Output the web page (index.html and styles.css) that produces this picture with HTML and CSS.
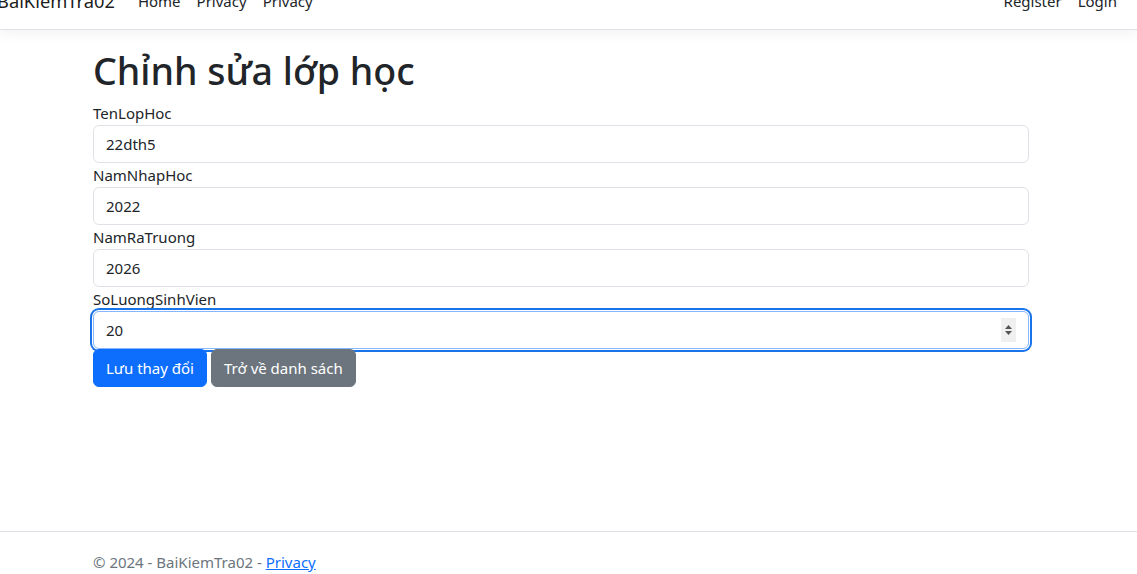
FILE: index.html
```html
<!DOCTYPE html>
<html lang="vi">
<head>
<meta charset="utf-8">
<title>Chỉnh sửa lớp học - BaiKiemTra02</title>
<link rel="stylesheet" href="styles.css">
</head>
<body>
<header class="site-header">
  <nav class="navbar">
    <div class="navbar-inner">
      <a class="brand" href="#">BaiKiemTra02</a>
      <ul class="nav nav-main">
        <li><a class="nav-link" href="#">Home</a></li>
        <li><a class="nav-link" href="#">Privacy</a></li>
        <li><a class="nav-link" href="#">Privacy</a></li>
      </ul>
      <ul class="nav nav-right">
        <li><a class="nav-link" href="#">Register</a></li>
        <li><a class="nav-link" href="#">Login</a></li>
      </ul>
    </div>
  </nav>
</header>
<main class="main">
  <div class="container">
    <h1 class="title">Chỉnh sửa lớp học</h1>
    <form class="form">
      <div class="field">
        <label class="label">TenLopHoc</label>
        <input class="control" type="text" value="22dth5">
      </div>
      <div class="field">
        <label class="label">NamNhapHoc</label>
        <input class="control" type="text" value="2022">
      </div>
      <div class="field">
        <label class="label">NamRaTruong</label>
        <input class="control" type="text" value="2026">
      </div>
      <div class="field">
        <label class="label">SoLuongSinhVien</label>
        <div class="control control-focus">
          <span class="value">20</span>
          <span class="spinner">
            <svg width="9" height="18" viewBox="0 0 9 18"><path d="M4.5 4 L8 8 H1 Z" fill="#555"/><path d="M1 10 H8 L4.5 14 Z" fill="#555"/></svg>
          </span>
        </div>
      </div>
      <div class="actions">
        <button type="button" class="btn btn-primary">Lưu thay đổi</button>
        <button type="button" class="btn btn-secondary">Trở về danh sách</button>
      </div>
    </form>
  </div>
</main>
<footer class="footer">
  <div class="container">© 2024 - BaiKiemTra02 - <a class="footer-link" href="#">Privacy</a></div>
</footer>
</body>
</html>
```

FILE: styles.css
```css
* { box-sizing: border-box; }
html, body { height: 100%; }
body {
  margin: 0;
  overflow: hidden;
  font-family: "Noto Sans", "Open Sans", sans-serif;
  font-size: 15px;
  line-height: 24px;
  color: #212529;
  background: #fff;
}
.site-header { margin-top: -27px; }
.navbar {
  background: #fff;
  border-bottom: 1px solid #dee2e6;
  box-shadow: 0 4px 12px rgba(0,0,0,.05);
  padding: 8px 0;
}
.navbar-inner {
  display: flex;
  align-items: center;
  padding: 0 12px 0 0;
  margin-left: -3px;
}
.brand {
  font-size: 18.3px;
  line-height: 30px;
  padding: 5px 0;
  margin-right: 15px;
  color: rgba(0,0,0,.9);
  text-decoration: none;
}
.nav {
  list-style: none;
  margin: 0;
  padding: 0;
  display: flex;
}
.nav-main { flex: 1; }
.nav-link {
  display: block;
  padding: 8px 8px;
  color: #212529;
  text-decoration: none;
}
.container {
  width: 936px;
  margin-left: 93px;
}
.main {
  min-height: 501px;
  padding-top: 15px;
}
.title {
  margin: 2px 0 6px;
  font-size: 37.5px;
  font-weight: 500;
  line-height: 48px;
}
.form { margin: 0; }
.field { display: flex; flex-direction: column; }
.label { display: block; line-height: 24px; }
.control {
  display: block;
  width: 100%;
  height: 38px;
  padding: 6px 12px;
  font: inherit;
  line-height: 24px;
  color: #212529;
  background: #fff;
  border: 1px solid #dee2e6;
  border-radius: 6px;
  outline: none;
}
.control-focus {
  display: flex;
  align-items: center;
  border-color: #86b7fe;
  box-shadow: 0 0 0 1px #fff, 0 0 0 3px #1a73e8;
  padding-right: 12px;
}
.value { flex: 1; }
.spinner {
  display: flex;
  align-items: center;
  justify-content: center;
  width: 15px;
  height: 24px;
  background: #f0f0f0;
}
.actions { display: flex; gap: 4px; }
.btn {
  font: inherit;
  line-height: 24px;
  padding: 6px 12px;
  border: 1px solid transparent;
  border-radius: 6px;
  color: #fff;
  cursor: pointer;
}
.btn-primary { background: #0d6efd; border-color: #0d6efd; }
.btn-secondary { background: #6c757d; border-color: #6c757d; }
.footer {
  border-top: 1px solid #dee2e6;
  line-height: 60px;
  color: #6c757d;
  white-space: nowrap;
}
.footer-link { color: #0d6efd; }
```
